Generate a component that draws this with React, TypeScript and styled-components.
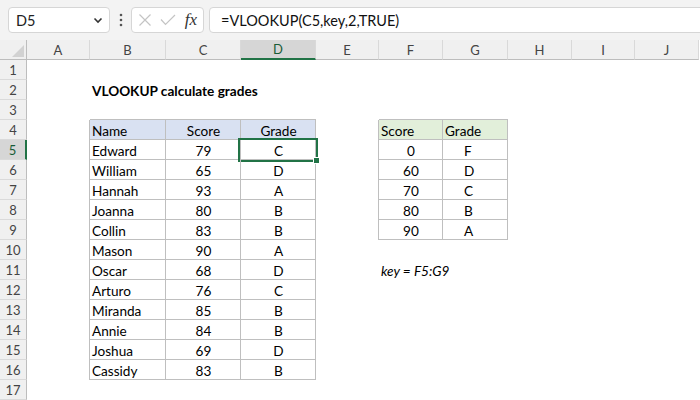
import React from 'react';
import styled, { createGlobalStyle, css } from 'styled-components';

const GlobalStyle = createGlobalStyle`
  body {
    margin: 0;
    background: #fff;
    font-family: Lato, "Liberation Sans", sans-serif;
  }
`;

const COLS = ['A', 'B', 'C', 'D', 'E', 'F', 'G', 'H', 'I', 'J'];
const WIDTHS = [63, 76, 75, 75, 63, 64, 65, 64, 63, 64];
const ROW_COUNT = 17;
const ACTIVE_COL = 3;
const ACTIVE_ROW = 5;

const students: [string, number, string][] = [
  ['Edward', 79, 'C'],
  ['William', 65, 'D'],
  ['Hannah', 93, 'A'],
  ['Joanna', 80, 'B'],
  ['Collin', 83, 'B'],
  ['Mason', 90, 'A'],
  ['Oscar', 68, 'D'],
  ['Arturo', 76, 'C'],
  ['Miranda', 85, 'B'],
  ['Annie', 84, 'B'],
  ['Joshua', 69, 'D'],
  ['Cassidy', 83, 'B'],
];

const gradeKey: [number, string][] = [
  [0, 'F'],
  [60, 'D'],
  [70, 'C'],
  [80, 'B'],
  [90, 'A'],
];

type Fill = 'blue' | 'green';

interface CellData {
  text?: string;
  align?: 'left' | 'center';
  fill?: Fill;
  bold?: boolean;
  italic?: boolean;
  indent?: number;
  boxed?: boolean;
  top?: boolean;
  left?: boolean;
  selected?: boolean;
}

const buildSheet = (): Record<string, CellData> => {
  const cells: Record<string, CellData> = {};
  const put = (col: number, row: number, data: CellData) => {
    cells[`${col}-${row}`] = data;
  };

  put(1, 2, { text: 'VLOOKUP calculate grades', bold: true });

  put(1, 4, { text: 'Name', fill: 'blue', boxed: true, top: true, left: true });
  put(2, 4, { text: 'Score', fill: 'blue', boxed: true, top: true, align: 'center' });
  put(3, 4, { text: 'Grade', fill: 'blue', boxed: true, top: true, align: 'center' });
  students.forEach(([name, score, grade], i) => {
    const row = 5 + i;
    put(1, row, { text: name, boxed: true, left: true });
    put(2, row, { text: String(score), boxed: true, align: 'center' });
    put(3, row, { text: grade, boxed: true, align: 'center', selected: row === ACTIVE_ROW });
  });

  put(5, 4, { text: 'Score', fill: 'green', boxed: true, top: true, left: true });
  put(6, 4, { text: 'Grade', fill: 'green', boxed: true, top: true });
  gradeKey.forEach(([score, grade], i) => {
    const row = 5 + i;
    put(5, row, { text: String(score), boxed: true, left: true, align: 'center' });
    put(6, row, { text: grade, boxed: true, indent: 21 });
  });

  put(5, 11, { text: 'key = F5:G9', italic: true });

  return cells;
};

const Page = styled.div`
  width: 700px;
  height: 400px;
  overflow: hidden;
  display: flex;
  flex-direction: column;
  background: #fff;
`;

const Toolbar = styled.div`
  height: 40px;
  flex: none;
  background: #f3f3f3;
  display: flex;
  align-items: center;
  padding-left: 8px;
`;

const Box = styled.div`
  height: 26px;
  box-sizing: border-box;
  background: #fff;
  border: 1px solid #d6d6d6;
  border-radius: 4px;
  display: flex;
  align-items: center;
`;

const NameBox = styled(Box)`
  width: 102px;
  justify-content: space-between;
  padding: 0 6px 0 7px;
  font-size: 14.5px;
  color: #222;
`;

const Dots = styled.div`
  width: 21px;
  display: flex;
  justify-content: center;
`;

const FxBox = styled(Box)`
  width: 73px;
  margin-right: 5px;
  padding: 0 5px 0 6px;
  justify-content: space-between;
`;

const FxLabel = styled.span`
  font-family: "Liberation Serif", serif;
  font-style: italic;
  font-size: 17px;
  color: #333;
  padding-right: 1px;
`;

const FormulaBox = styled(Box)`
  flex: 1;
  margin-right: -6px;
  padding-left: 11px;
  font-size: 14.5px;
  color: #111;
  white-space: nowrap;
`;

const Grid = styled.div`
  display: grid;
  grid-template-columns: 27px ${WIDTHS.map((w) => `${w}px`).join(' ')};
  grid-auto-rows: 20px;
`;

const headerBase = css`
  box-sizing: border-box;
  display: flex;
  align-items: center;
  justify-content: center;
  background: #f0f0f0;
  color: #444;
  font-size: 13px;
`;

const Corner = styled.div`
  ${headerBase};
  border-right: 1px solid #bdbdbd;
  border-bottom: 1px solid #bdbdbd;
  justify-content: flex-end;
  align-items: flex-end;
  padding: 0 2px 2px 0;
`;

const ColHead = styled.div<{ $active?: boolean }>`
  ${headerBase};
  border-right: 1px solid #d9d9d9;
  border-bottom: 1px solid #bdbdbd;
  ${(p) =>
    p.$active &&
    css`
      background: #d6d6d6;
      color: #185c37;
      border-bottom: 2px solid #217346;
    `}
`;

const RowHead = styled.div<{ $active?: boolean }>`
  ${headerBase};
  border-right: 1px solid #bdbdbd;
  border-bottom: 1px solid #dadada;
  ${(p) =>
    p.$active &&
    css`
      background: #d6d6d6;
      color: #185c37;
      border-right: 2px solid #217346;
    `}
`;

const fills: Record<Fill, string> = {
  blue: '#d9e1f2',
  green: '#e2efda',
};

const LINE = '#bfbfbf';

const Cell = styled.div<{
  $align?: 'left' | 'center';
  $fill?: Fill;
  $bold?: boolean;
  $italic?: boolean;
  $indent?: number;
  $boxed?: boolean;
  $top?: boolean;
  $left?: boolean;
  $selected?: boolean;
}>`
  position: relative;
  display: flex;
  align-items: center;
  justify-content: ${(p) => (p.$align === 'center' ? 'center' : 'flex-start')};
  padding-left: ${(p) => (p.$align === 'center' ? 0 : p.$indent ?? 2)}px;
  padding-top: 1px;
  white-space: nowrap;
  font-size: 13.6px;
  color: #000;
  font-weight: ${(p) => (p.$bold ? 700 : 400)};
  font-style: ${(p) => (p.$italic ? 'italic' : 'normal')};
  background: ${(p) => (p.$fill ? fills[p.$fill] : 'transparent')};
  box-shadow: ${(p) =>
    p.$boxed
      ? [
          `inset -1px -1px 0 ${LINE}`,
          p.$top ? `0 -1px 0 ${LINE}` : null,
          p.$left ? `-1px 0 0 ${LINE}` : null,
        ]
          .filter(Boolean)
          .join(', ')
      : 'none'};

  ${(p) =>
    p.$selected &&
    css`
      &::after {
        content: '';
        position: absolute;
        left: -3px;
        top: -2px;
        right: -2px;
        bottom: -2px;
        border: 2px solid #217346;
      }
      &::before {
        content: '';
        position: absolute;
        right: -4px;
        bottom: -4px;
        width: 5px;
        height: 5px;
        background: #217346;
        border: 1px solid #fff;
        z-index: 1;
      }
    `}
`;

const CloseIcon = () => (
  <svg width="14" height="14" viewBox="0 0 14 14">
    <path d="M1.5 1.5 L12.5 12.5 M12.5 1.5 L1.5 12.5" stroke="#c4c4c4" strokeWidth="1.2" fill="none" />
  </svg>
);

const CheckIcon = () => (
  <svg width="16" height="12" viewBox="0 0 16 12">
    <path d="M1 5.5 L5.5 10.5 L15 1" stroke="#c4c4c4" strokeWidth="1.2" fill="none" />
  </svg>
);

const ChevronIcon = () => (
  <svg width="10" height="7" viewBox="0 0 10 7">
    <path d="M1.5 1.5 L5 5 L8.5 1.5" stroke="#333" strokeWidth="1.6" fill="none" />
  </svg>
);

const DotsIcon = () => (
  <svg width="4" height="14" viewBox="0 0 4 14">
    <circle cx="2" cy="2" r="1.3" fill="#555" />
    <circle cx="2" cy="7" r="1.3" fill="#555" />
    <circle cx="2" cy="12" r="1.3" fill="#555" />
  </svg>
);

const CornerMark = () => (
  <svg width="12" height="12" viewBox="0 0 12 12">
    <polygon points="12,0 12,12 0,12" fill="#d2d2d2" />
  </svg>
);

const App = (): JSX.Element => {
  const cells = buildSheet();
  const rows = Array.from({ length: ROW_COUNT }, (_, i) => i + 1);

  return (
    <React.Fragment>
      <GlobalStyle />
      <Page>
        <Toolbar>
          <NameBox>
            <span>D5</span>
            <ChevronIcon />
          </NameBox>
          <Dots>
            <DotsIcon />
          </Dots>
          <FxBox>
            <CloseIcon />
            <CheckIcon />
            <FxLabel>fx</FxLabel>
          </FxBox>
          <FormulaBox>=VLOOKUP(C5,key,2,TRUE)</FormulaBox>
        </Toolbar>
        <Grid>
          <Corner>
            <CornerMark />
          </Corner>
          {COLS.map((c, i) => (
            <ColHead key={c} $active={i === ACTIVE_COL}>
              {c}
            </ColHead>
          ))}
          {rows.map((row) => (
            <React.Fragment key={row}>
              <RowHead $active={row === ACTIVE_ROW}>{row}</RowHead>
              {COLS.map((c, col) => {
                const d = cells[`${col}-${row}`] ?? {};
                return (
                  <Cell
                    key={c}
                    $align={d.align}
                    $fill={d.fill}
                    $bold={d.bold}
                    $italic={d.italic}
                    $indent={d.indent}
                    $boxed={d.boxed}
                    $top={d.top}
                    $left={d.left}
                    $selected={d.selected}
                  >
                    {d.text}
                  </Cell>
                );
              })}
            </React.Fragment>
          ))}
        </Grid>
      </Page>
    </React.Fragment>
  );
};

export default App;
